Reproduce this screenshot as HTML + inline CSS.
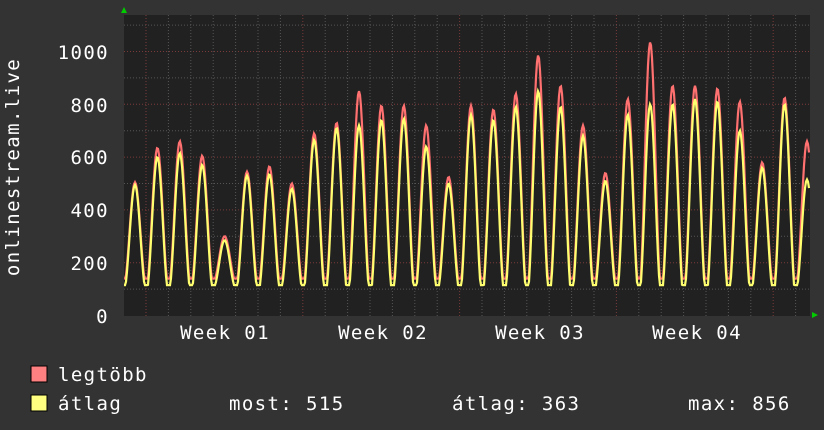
<!DOCTYPE html>
<html><head><meta charset="utf-8"><style>
html,body{margin:0;padding:0;background:#333;width:824px;height:430px;overflow:hidden}
svg{display:block}
text{font-family:"DejaVu Sans Mono","Liberation Mono",monospace;fill:#fff;letter-spacing:1.4px}
</style></head><body>
<svg id="s" width="824" height="430" xmlns="http://www.w3.org/2000/svg">
<rect x="0" y="0" width="824" height="430" fill="#333"/>
<rect x="124" y="15" width="686" height="301" fill="#212121"/>
<g id="grid"></g>
<g id="data"></g>
<polygon points="121,13 127,13 124,7" fill="#0c0"/>
<polygon points="812,312 812,318 818,315" fill="#0c0"/>
<g font-size="19" text-anchor="end">
<text x="109" y="59">1000</text>
<text x="109" y="112">800</text>
<text x="109" y="164">600</text>
<text x="109" y="217">400</text>
<text x="109" y="270">200</text>
<text x="109" y="323">0</text>
</g>
<text transform="translate(19,167) rotate(-90)" font-size="19" text-anchor="middle">onlinestream.live</text>
<g font-size="19" text-anchor="middle">
<text x="225" y="339">Week 01</text>
<text x="383" y="339">Week 02</text>
<text x="540" y="339">Week 03</text>
<text x="697" y="339">Week 04</text>
</g>
<rect x="31" y="366" width="16" height="16" fill="#ff8080" stroke="#000"/>
<rect x="31" y="395" width="16" height="16" fill="#ffff80" stroke="#000"/>
<g font-size="19">
<text x="58" y="381">legtöbb</text>
<text x="58" y="410">átlag</text>
<text x="229" y="410">most: 515</text>
<text x="452" y="410">átlag: 363</text>
<text x="688" y="410">max: 856</text>
</g>
</svg>
<script>
function Y(v){return 315.5-v*0.264;}
var g=document.getElementById('grid'),h='';
for(var v=100;v<=1100;v+=100){var y=Y(v).toFixed(1);var maj=v%200==0;
h+='<line x1="124" x2="810" y1="'+y+'" y2="'+y+'" stroke="'+(maj?'#7a3a3a':'#555')+'" stroke-dasharray="1,2"/>';}
for(var i=0;i<31;i++){var x=(146+i*22.4);if(x>809)break;var maj=(i%7==0);
h+='<line y1="15" y2="316" x1="'+x.toFixed(1)+'" x2="'+x.toFixed(1)+'" stroke="'+(maj?'#7a3a3a':'#555')+'" stroke-dasharray="1,2"/>';}
g.innerHTML=h;
var pk=[[505,495],[635,600],[660,615],[605,570],[300,285],[545,530],[565,535],[500,480],[690,665],[730,710],[850,720],[795,740],[795,745],[720,640],[525,500],[795,760],[780,740],[840,790],[985,850],[870,790],[720,680],[540,510],[820,760],[1035,800],[870,800],[870,820],[860,810],[810,700],[580,560],[825,800],[660,515]];
function series(k,mn){var p=[];for(var x=124;x<=809;x+=1){var t=(x-135)/22.4;var i=Math.round(t);var ph=t-i;
var ii=Math.max(0,Math.min(pk.length-1,i));var peak=pk[ii][k];
var c=(1+Math.cos(2*Math.PI*ph))/2;c=Math.max(0,(c-0.06)/0.94);var f=Math.pow(c,1.0);
var v=mn+(peak-mn)*f;p.push(x+','+Y(v).toFixed(1));}return p.join(' ');}
document.getElementById('data').innerHTML=
'<polyline points="'+series(0,140)+'" fill="none" stroke="#ff7070" stroke-width="2.2"/>'+
'<polyline points="'+series(1,115)+'" fill="none" stroke="#ffff70" stroke-width="2.2"/>';
</script>
</body></html>
